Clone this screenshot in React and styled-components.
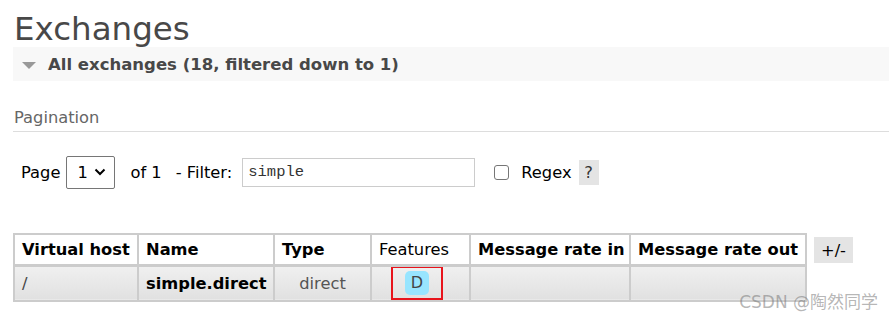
import React from "react";
import styled, { createGlobalStyle } from "styled-components";

const Global = createGlobalStyle`
  html, body { margin: 0; padding: 0; background: #fff; }
  body { font-family: "DejaVu Sans", Verdana, sans-serif; color: #484848; }
`;

const Page = styled.div`
  position: relative;
  width: 893px;
  height: 320px;
  overflow: hidden;
  padding: 0 4px 0 13px;
  box-sizing: border-box;
`;

const Title = styled.h1`
  margin: 0;
  padding: 12px 0 0 1px;
  height: 47px;
  box-sizing: border-box;
  font-size: 32.5px;
  font-weight: normal;
  line-height: 34px;
  color: #484848;
`;

const SectionBar = styled.div`
  display: flex;
  align-items: center;
  gap: 12px;
  height: 34px;
  background: #f8f8f8;
  padding-left: 9px;
  font-size: 16.5px;
  font-weight: bold;
  color: #484848;
`;

const Triangle = styled.span`
  width: 0;
  height: 0;
  border-left: 7px solid transparent;
  border-right: 7px solid transparent;
  border-top: 7px solid #999;
  margin-top: 2px;
`;

const SubHeading = styled.div`
  margin-top: 27px;
  padding: 0 0 4px 1px;
  font-size: 16.3px;
  color: #666;
  border-bottom: 1px solid #ddd;
`;

const FilterRow = styled.div`
  display: flex;
  align-items: center;
  height: 34px;
  margin-top: 23px;
  padding-left: 8px;
  font-size: 16.3px;
  color: #000;
`;

const Label = styled.span`
  margin-right: ${(p) => p.$mr || 0}px;
`;

const SelectBox = styled.div`
  display: flex;
  align-items: center;
  justify-content: space-between;
  width: 49px;
  height: 33px;
  box-sizing: border-box;
  border: 1px solid #767676;
  border-radius: 2px;
  padding: 0 8px 0 10px;
  margin-right: 15px;
  font-size: 16.3px;
  color: #000;
`;

const TextInput = styled.div`
  width: 233px;
  height: 29px;
  box-sizing: border-box;
  border: 1px solid #ccc;
  padding: 3px 5px;
  font-family: "Liberation Mono", "DejaVu Sans Mono", monospace;
  font-size: 15.5px;
  line-height: 21px;
  color: #333;
  margin-right: 19px;
`;

const Checkbox = styled.span`
  width: 13px;
  height: 13px;
  border: 1.5px solid #767676;
  border-radius: 3px;
  margin-right: 12px;
`;

const Help = styled.span`
  display: inline-flex;
  align-items: center;
  justify-content: center;
  width: 20px;
  height: 25px;
  background: #e4e4e4;
  margin-left: 7px;
  color: #333;
`;

const TableRow = styled.div`
  display: flex;
  align-items: flex-start;
  margin-top: 44px;
  gap: 7px;
`;

const Table = styled.table`
  border-collapse: collapse;
  table-layout: fixed;
  width: 792px;
  font-size: 16.3px;
  color: #000;
`;

const Th = styled.th`
  border: 2px solid #ccc;
  border-bottom-width: 3px;
  height: 31px;
  padding: 0 0 0 7px;
  text-align: left;
  font-weight: ${(p) => (p.$light ? "normal" : "bold")};
  white-space: nowrap;
  overflow: visible;
  width: ${(p) => p.$w}px;
  box-sizing: border-box;
  background: #fff;
`;

const Td = styled.td`
  border: 2px solid #ccc;
  height: 33px;
  padding: 0 7px;
  background: linear-gradient(#f0f0f0, #e0e0e0);
  text-align: ${(p) => p.$align || "left"};
  font-weight: ${(p) => (p.$bold ? "bold" : "normal")};
  color: ${(p) => p.$color || "#000"};
  white-space: nowrap;
  box-sizing: border-box;
`;

const Highlight = styled.div`
  display: flex;
  align-items: center;
  justify-content: center;
  width: 52px;
  height: 34px;
  box-sizing: border-box;
  border: 2.5px solid #e8141c;
  margin: -1px auto 0 12px;
`;

const Badge = styled.span`
  display: inline-flex;
  align-items: center;
  justify-content: center;
  width: 24px;
  height: 24px;
  border-radius: 5px;
  background: #98e5ff;
  color: #444;
  font-size: 16px;
`;

const PlusMinus = styled.span`
  display: inline-flex;
  align-items: center;
  justify-content: center;
  width: 39px;
  height: 26px;
  margin-top: 4px;
  background: #e4e4e4;
  font-size: 16.3px;
  color: #000;
`;

const Watermark = styled.div`
  position: absolute;
  right: 15px;
  bottom: 7px;
  font-family: "DejaVu Sans", "Noto Sans CJK SC", sans-serif;
  font-size: 17px;
  color: rgba(120, 120, 120, 0.55);
`;

export default function App() {
  return (
    <>
      <Global />
      <Page>
        <Title>Exchanges</Title>
        <SectionBar>
          <Triangle />
          All exchanges (18, filtered down to 1)
        </SectionBar>
        <SubHeading>Pagination</SubHeading>
        <FilterRow>
          <Label $mr={6}>Page</Label>
          <SelectBox>
            <span>1</span>
            <svg width="12" height="8" viewBox="0 0 12 8">
              <path d="M1.5 1.5 L6 6 L10.5 1.5" fill="none" stroke="#000" strokeWidth="2" />
            </svg>
          </SelectBox>
          <Label $mr={14}>of 1</Label>
          <Label $mr={10}>- Filter:</Label>
          <TextInput>simple</TextInput>
          <Checkbox />
          <Label>Regex</Label>
          <Help>?</Help>
        </FilterRow>
        <TableRow>
          <Table>
            <thead>
              <tr>
                <Th $w={124}>Virtual host</Th>
                <Th $w={136}>Name</Th>
                <Th $w={97}>Type</Th>
                <Th $w={99} $light>Features</Th>
                <Th $w={160}>Message rate in</Th>
                <Th $w={176}>Message rate out</Th>
              </tr>
            </thead>
            <tbody>
              <tr>
                <Td $color="#444">/</Td>
                <Td $bold>simple.direct</Td>
                <Td $align="center" $color="#555">direct</Td>
                <Td>
                  <Highlight>
                    <Badge>D</Badge>
                  </Highlight>
                </Td>
                <Td />
                <Td />
              </tr>
            </tbody>
          </Table>
          <PlusMinus>+/-</PlusMinus>
        </TableRow>
        <Watermark>CSDN @陶然同学</Watermark>
      </Page>
    </>
  );
}
